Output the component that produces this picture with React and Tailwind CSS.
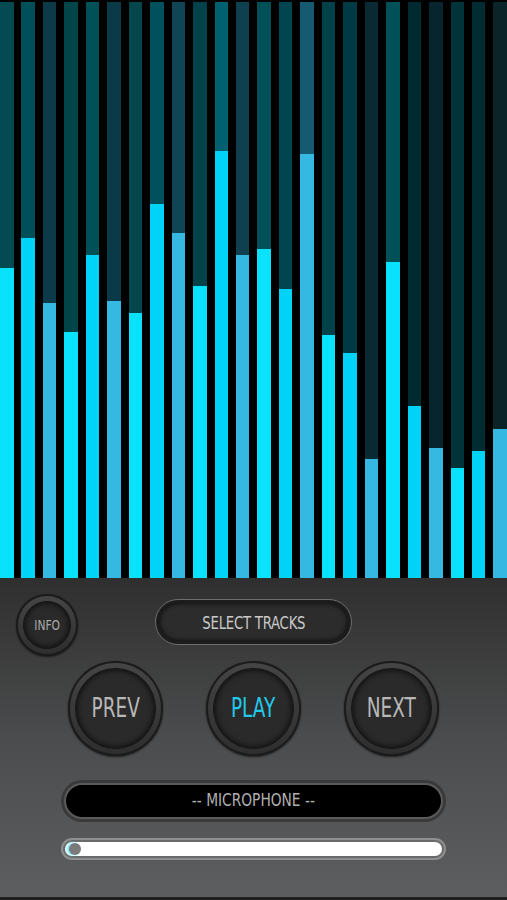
import React from 'react';

// bar heights (px above the panel) for the peak-hold track and the live level
const BARS = [
  { level: 310, track: '#044a52' },
  { level: 340, track: '#00505c' },
  { level: 275, track: '#0c3a48' },
  { level: 246, track: '#024548' },
  { level: 323, track: '#005058' },
  { level: 277, track: '#0a3a48' },
  { level: 265, track: '#03474d' },
  { level: 374, track: '#00515e' },
  { level: 345, track: '#0f4555' },
  { level: 292, track: '#02424a' },
  { level: 427, track: '#006070' },
  { level: 323, track: '#0f4050' },
  { level: 329, track: '#005058' },
  { level: 289, track: '#004550' },
  { level: 424, track: '#155a70' },
  { level: 243, track: '#00424a' },
  { level: 225, track: '#003a44' },
  { level: 119, track: '#0a2a33' },
  { level: 316, track: '#005058' },
  { level: 172, track: '#002a30' },
  { level: 130, track: '#08252e' },
  { level: 110, track: '#00343a' },
  { level: 127, track: '#002c32' },
  { level: 149, track: '#0a2428' },
];

const LEVEL_COLORS = ['#08e2fd', '#00d2f8', '#35b9e2'];

const FONT = { fontFamily: '"DejaVu Sans Condensed", "Liberation Sans", sans-serif' };

const RoundButton = ({ label, size, textClass }) => (
  <div
    className="rounded-full bg-[#1b1b1b] p-[2px] shadow-[0_1px_2px_rgba(0,0,0,0.6)]"
    style={{ width: size, height: size }}
  >
    <div className="w-full h-full rounded-full bg-gradient-to-b from-[#454545] to-[#2e2e2e] p-[5px]">
      <div className="w-full h-full rounded-full bg-[#2a2a2a] border border-[#141414] shadow-[inset_0_0_6px_rgba(0,0,0,0.9)] flex items-center justify-center">
        <span className={`inline-block ${textClass}`} style={FONT}>{label}</span>
      </div>
    </div>
  </div>
);

const Visualizer = () => (
  <div className="h-[578px] bg-black flex justify-between items-end pt-[2px]">
    {BARS.map((bar, i) => (
      <div
        key={i}
        className="w-[13.5px] h-full flex flex-col justify-end"
        style={{ backgroundColor: bar.track }}
      >
        <div style={{ height: bar.level, backgroundColor: LEVEL_COLORS[i % 3] }}></div>
      </div>
    ))}
  </div>
);

export default function App() {
  return (
    <div className="w-[507px] h-[900px] overflow-hidden bg-black">
      <Visualizer />
      <div className="h-[322px] bg-gradient-to-b from-[#2f2f2f] via-[#4b4c4d] to-[#5c5e60] border-b-[3px] border-[#1f1f1f] pt-[16px]">
        <div className="grid grid-cols-[1fr_auto_1fr] items-center">
          <div className="pl-[16px]">
            <RoundButton label="INFO" size={62} textClass="text-[14px] text-[#a9a9a9] mt-[1px] scale-x-[0.85]" />
          </div>
          <div className="w-[197px] h-[46px] rounded-full border-[1.5px] border-[#6e6e6e] bg-[#1c1c1c] p-[3px] mt-[-6px]">
            <div className="w-full h-full rounded-full bg-[#2c2c2c] shadow-[inset_0_0_5px_rgba(0,0,0,0.9)] flex items-center justify-center">
              <span className="inline-block text-[18px] text-[#c9c9c9] tracking-[-0.3px] scale-x-[0.82] whitespace-nowrap" style={FONT}>SELECT TRACKS</span>
            </div>
          </div>
          <div></div>
        </div>

        <div className="flex justify-center gap-[43px] mt-[5px]">
          <RoundButton label="PREV" size={95} textClass="text-[27px] text-[#b8b8b8] scale-x-[0.76]" />
          <RoundButton label="PLAY" size={95} textClass="text-[27px] text-[#22c9ea] scale-x-[0.76]" />
          <RoundButton label="NEXT" size={95} textClass="text-[27px] text-[#b8b8b8] scale-x-[0.76]" />
        </div>

        <div className="w-[385px] h-[42px] mx-auto mt-[24px] rounded-full bg-[#3a3a3a] p-[3px]">
          <div className="w-full h-full rounded-full bg-black border-2 border-[#5a5a5a] flex items-center justify-center">
            <span className="inline-block text-[17px] text-[#b0b0b0] scale-x-[0.9] whitespace-nowrap" style={FONT}>-- MICROPHONE --</span>
          </div>
        </div>

        <div className="relative w-[385px] h-[22px] mx-auto mt-[16px] rounded-full bg-[#8f8f8f] p-[2px]">
          <div className="w-full h-full rounded-full bg-white border-2 border-[#6a6a6a]"></div>
          <div className="absolute left-[8px] top-[5px] w-[12px] h-[12px] rounded-full bg-[#7a7a7a] shadow-[-2px_0_3px_#5ee8ff]"></div>
        </div>
      </div>
    </div>
  );
}
